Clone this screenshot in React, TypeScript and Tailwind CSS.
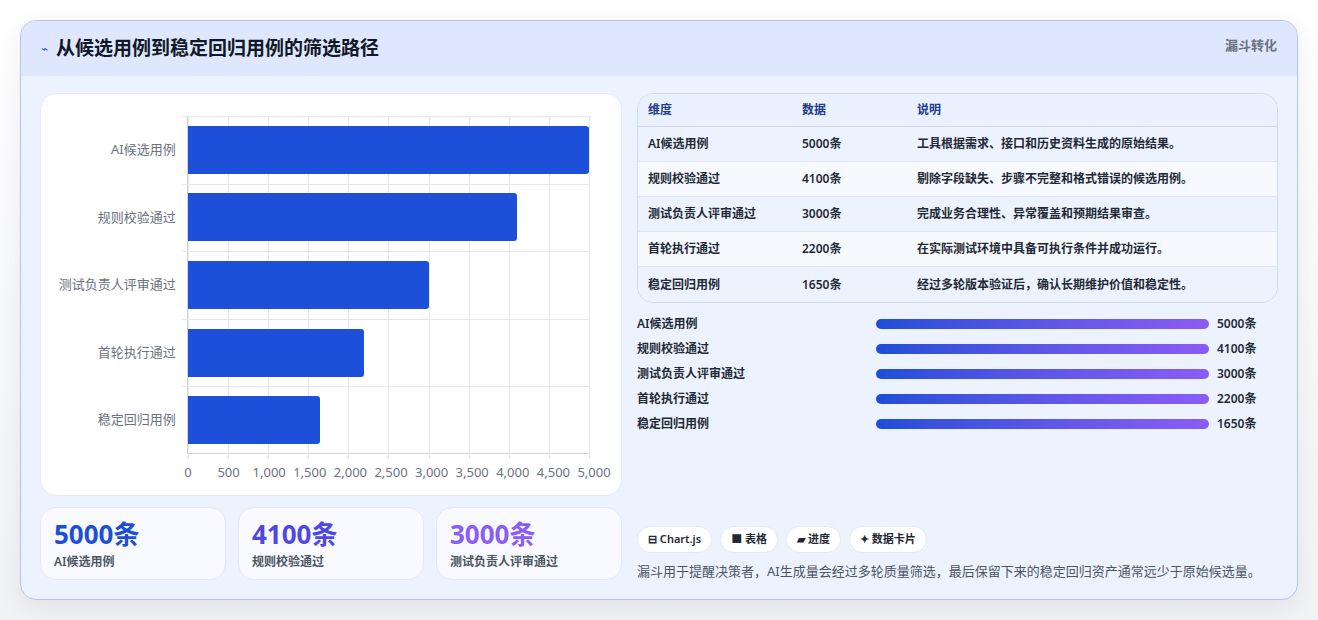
const font = { fontFamily: '"Noto Sans", "Noto Sans CJK SC", sans-serif' }

const rows = [
  { name: "AI候选用例", v: 5000, desc: "工具根据需求、接口和历史资料生成的原始结果。" },
  { name: "规则校验通过", v: 4100, desc: "剔除字段缺失、步骤不完整和格式错误的候选用例。" },
  { name: "测试负责人评审通过", v: 3000, desc: "完成业务合理性、异常覆盖和预期结果审查。" },
  { name: "首轮执行通过", v: 2200, desc: "在实际测试环境中具备可执行条件并成功运行。" },
  { name: "稳定回归用例", v: 1650, desc: "经过多轮版本验证后，确认长期维护价值和稳定性。" },
]

const ticks = ["0", "500", "1,000", "1,500", "2,000", "2,500", "3,000", "3,500", "4,000", "4,500", "5,000"]

function Chart() {
  return (
    <div className="h-[403px] rounded-2xl bg-white border border-[#e3e9f7] pt-[22px] pl-[14px] pr-[32px] flex flex-col">
      <div className="flex">
        <div className="w-[133px] flex flex-col">
          {rows.map((r) => (
            <div key={r.name} className="h-[67.6px] flex items-center justify-end pr-[11px] text-[13px] text-[#6b7280]">
              {r.name}
            </div>
          ))}
        </div>
        <div className="relative w-[406px] h-[338px] border-l border-b border-[#cfd5e0]">
          {ticks.map((t, i) => (
            <div key={t} className="absolute top-0 bottom-[-6px] w-px bg-[#e5e7eb]" style={{ left: `${i * 10}%` }} />
          ))}
          {[0, 1, 2, 3, 4].map((i) => (
            <div key={i} className="absolute left-[-6px] right-0 h-px bg-[#e5e7eb]" style={{ top: i * 67.6 }} />
          ))}
          <div className="relative flex flex-col">
            {rows.map((r) => (
              <div key={r.name} className="h-[67.6px] flex items-center">
                <div className="h-[48px] bg-[#1d4fd8] rounded-r-[3px]" style={{ width: `${(r.v / 5000) * 100}%` }} />
              </div>
            ))}
          </div>
        </div>
      </div>
      <div className="relative ml-[133px] w-[406px] h-[30px] text-[13px] text-[#6b7280]">
        {ticks.map((t, i) => (
          <span key={t} className="absolute top-[9px] -translate-x-1/2" style={{ left: `${i * 10}%` }}>
            {t}
          </span>
        ))}
      </div>
    </div>
  )
}

const stats = [
  { v: "5000条", l: "AI候选用例", c: "text-[#1d4ed8]" },
  { v: "4100条", l: "规则校验通过", c: "text-[#4f46e5]" },
  { v: "3000条", l: "测试负责人评审通过", c: "text-[#8b5cf6]" },
]

export default function App() {
  return (
    <div className="min-h-[620px] bg-gradient-to-b from-white to-[#f1f2f4] pt-[20px] px-[20px]" style={font}>
      <div className="w-[1278px] h-[580px] rounded-2xl border border-[#b6c3ec] bg-[#edf3fe] overflow-hidden shadow-[0_8px_24px_rgba(30,50,100,0.08)]">
        <div className="h-[55px] bg-[#dee7fd] flex items-center justify-between pl-[20px] pr-[20px]">
          <div className="flex items-center gap-[8px]">
            <span className="text-[#3b5bdb] text-[12px]">⌁</span>
            <h1 className="text-[19px] font-bold text-[#111827]">从候选用例到稳定回归用例的筛选路径</h1>
          </div>
          <span className="text-[13px] font-semibold text-[#6b7280] self-start mt-[15px]">漏斗转化</span>
        </div>
        <div className="flex gap-[15px] pt-[17px] px-[19px]">
          <div className="w-[582px] flex flex-col gap-[11px]">
            <Chart />
            <div className="grid grid-cols-3 gap-[12px]">
              {stats.map((s) => (
                <div key={s.l} className="h-[73px] rounded-2xl bg-[#f8faff] border border-[#e1e8f8] px-[13px] pt-[9px]">
                  <div className={`text-[26px] font-bold leading-[34px] ${s.c}`}>{s.v}</div>
                  <div className="text-[12px] font-semibold text-[#4b5563] mt-[2px]">{s.l}</div>
                </div>
              ))}
            </div>
          </div>
          <div className="w-[643px] flex flex-col">
            <div className="rounded-2xl border border-[#cfd9ef] overflow-hidden text-[12px] font-semibold text-[#1f2937]">
              <div className="h-[33px] flex items-center bg-[#eaf1fe] text-[#1e3a8a] border-b border-[#cfd9ef] px-[10px]">
                <span className="w-[154px]">维度</span>
                <span className="w-[115px]">数据</span>
                <span>说明</span>
              </div>
              {rows.map((r, i) => (
                <div key={r.name} className={`h-[35px] flex items-center px-[10px] ${i % 2 ? "bg-[#f6f9fe]" : "bg-[#edf3fe]"} ${i < 4 ? "border-b border-[#dfe6f4]" : ""}`}>
                  <span className="w-[154px]">{r.name}</span>
                  <span className="w-[115px]">{r.v}条</span>
                  <span>{r.desc}</span>
                </div>
              ))}
            </div>
            <div className="flex flex-col mt-[8px]">
              {rows.map((r) => (
                <div key={r.name} className="h-[25px] flex items-center text-[12px] font-semibold text-[#1f2937]">
                  <span className="w-[239px]">{r.name}</span>
                  <div className="w-[333px] h-[10px] rounded-full bg-gradient-to-r from-[#1d4ed8] to-[#8b5cf6]" />
                  <span className="ml-[8px]">{r.v}条</span>
                </div>
              ))}
            </div>
            <div className="flex gap-[8px] mt-[90px] text-[11px] font-semibold text-[#1f2937]">
              {["⊟ Chart.js", "■ 表格", "▰ 进度", "✦ 数据卡片"].map((c) => (
                <span key={c} className="h-[27px] px-[10px] rounded-full bg-white border border-[#e3e9f5] flex items-center">
                  {c}
                </span>
              ))}
            </div>
            <p className="mt-[9px] text-[13px] text-[#4b5563]">
              漏斗用于提醒决策者，AI生成量会经过多轮质量筛选，最后保留下来的稳定回归资产通常远少于原始候选量。
            </p>
          </div>
        </div>
      </div>
    </div>
  )
}
